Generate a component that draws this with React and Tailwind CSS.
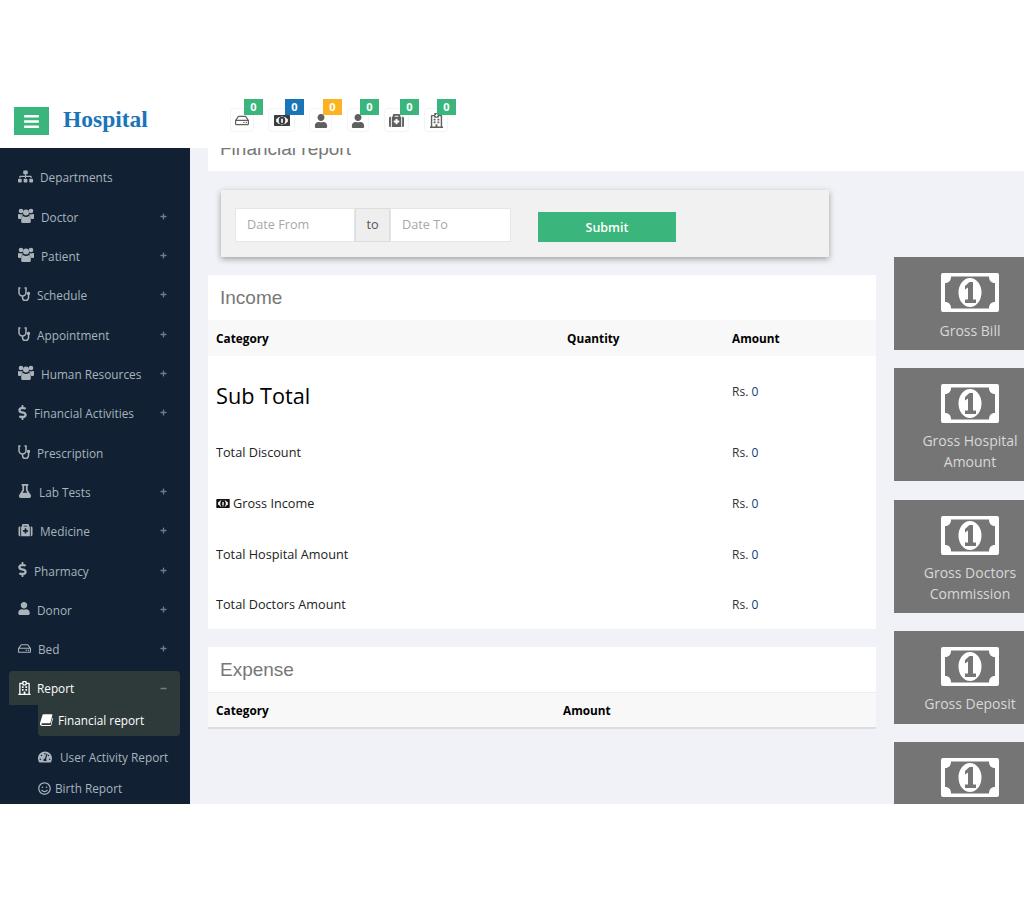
import React from "react";
import { FaSitemap, FaFlask, FaMedkit, FaUser, FaDollarSign, FaRegHdd, FaRegHospital, FaTachometerAlt, FaRegSmile, FaBars, FaPlus, FaMinus } from "react-icons/fa";

const Money = ({ className }) => (
  <svg viewBox="0 0 58 39" className={className} fill="currentColor">
    <path fillRule="evenodd" d="M2 0H56a2 2 0 0 1 2 2V37a2 2 0 0 1-2 2H2a2 2 0 0 1-2-2V2a2 2 0 0 1 2-2ZM10 3.500C10 7.500 8 10 4 10V29C8 29 10 31.500 10 35.500H48C48 31.500 50 29 54 29V10C50 10 48 7.500 48 3.500ZM29 5a11.500 14.500 0 1 0 0 29a11.500 14.500 0 1 0 0-29ZM24 30V26.500H27V14.500L24 16.500V13L28.500 9H32V26.500H35V30Z" />
  </svg>
);

const MoneySmall = ({ className }) => (
  <svg viewBox="0 0 58 39" className={className} fill="currentColor">
    <path fillRule="evenodd" d="M2 0H56a2 2 0 0 1 2 2V37a2 2 0 0 1-2 2H2a2 2 0 0 1-2-2V2a2 2 0 0 1 2-2ZM17 7C15 11 12 13 8 14V25C12 26 15 28 17 32H41C43 28 46 26 50 25V14C46 13 43 11 41 7ZM29 5a12 14.500 0 1 1 0 29a12 14.500 0 1 1 0-29ZM26 28V13H32V28Z" />
  </svg>
);

const Users = ({ className }) => (
  <svg viewBox="0 0 16 15" className={className} fill="currentColor">
    <circle cx="3" cy="3" r="2.300" />
    <circle cx="13" cy="3" r="2.300" />
    <circle cx="8" cy="4.500" r="3" />
    <path d="M0 6.500Q0 5.800 1 6Q3 6.800 4.800 6Q4.600 8 3.300 9.500Q2.800 10.500 2.800 11H1Q0 11 0 10ZM16 6.500Q16 5.800 15 6Q13 6.800 11.200 6Q11.400 8 12.700 9.500Q13.200 10.500 13.200 11H15Q16 11 16 10ZM5 8Q8 9.800 11 8Q12.800 8.500 12.800 11V13.500Q12.800 15 11.500 15H4.500Q3.200 15 3.200 13.500V11Q3.200 8.500 5 8Z" />
  </svg>
);

const Stetho = ({ className }) => (
  <svg viewBox="0 0 12 14" className={className} fill="none" stroke="currentColor" strokeWidth="1.500">
    <path d="M2.500 1H1V5.500A3.500 3.500 0 0 0 8 5.500V1H6.500" />
    <path d="M4.500 9V10.500A2.800 2.800 0 0 0 10.500 10.500V8" />
    <circle cx="10.500" cy="6.500" r="1" fill="currentColor" />
  </svg>
);

const Book = ({ className }) => (
  <svg viewBox="0 0 14 13" className={className} fill="currentColor">
    <path d="M3.800 .300H12.800Q13.600 .300 13.300 1.300L11.300 9.300Q11.100 10 10.300 10H2.500C1 10 1 11.800 2.500 11.800H11.500L13.300 4L14 4.800L12.300 12Q12 13 11 13H2.300C-.200 13 -.500 10.500 .300 9L2.500 1.500Q2.800 .300 3.800 .300Z" />
  </svg>
);

const items = [
  [FaSitemap, "Departments", 22, false, "w-[15px] h-[15px]"],
  [Users, "Doctor", 23, true, "w-[16px] h-[15px]"],
  [Users, "Patient", 23, true, "w-[16px] h-[15px]"],
  [Stetho, "Schedule", 19, true, "w-[12px] h-[14px]"],
  [Stetho, "Appointment", 19, true, "w-[12px] h-[14px]"],
  [Users, "Human Resources", 23, true, "w-[16px] h-[15px]"],
  [FaDollarSign, "Financial Activities", 16, true, "w-[9px] h-[15px]"],
  [Stetho, "Prescription", 19, false, "w-[12px] h-[14px]"],
  [FaFlask, "Lab Tests", 21, true, "w-[14px] h-[14px]"],
  [FaMedkit, "Medicine", 22, true, "w-[15px] h-[14px]"],
  [FaDollarSign, "Pharmacy", 16, true, "w-[9px] h-[15px]"],
  [FaUser, "Donor", 19, true, "w-[12px] h-[13px]"],
  [FaRegHdd, "Bed", 20, true, "w-[13px] h-[13px]"],
];

const badges = [
  [FaRegHdd, "bg-[#3ab57c]", "w-[24px]", "h-[13px] w-[14px]", "-right-[10px]"],
  [null, "bg-[#1a75b8]", "w-[27px] ml-[14px]", "", "-right-[10px]"],
  [FaUser, "bg-[#fcb322]", "w-[23px] ml-[14px]", "h-[14px] w-[14px]", "-right-[11px]"],
  [FaUser, "bg-[#3ab57c]", "w-[22px] ml-[15px]", "h-[14px] w-[14px]", "-right-[11px]"],
  [FaMedkit, "bg-[#3ab57c]", "w-[25px] ml-[15px]", "h-[15px] w-[15px]", "-right-[11px]"],
  [FaRegHospital, "bg-[#3ab57c]", "w-[24px] ml-[15px]", "h-[15px] w-[15px]", "-right-[9px]"],
];

const rows = [
  ["Total Discount", 51],
  ["Gross Income", 51, true],
  ["Total Hospital Amount", 51],
  ["Total Doctors Amount", 50],
];

const tiles = [
  ["Gross Bill", "h-[93px]", "mt-[8px]"],
  ["Gross Hospital Amount", "h-[113px]", "mt-[7px]"],
  ["Gross Doctors Commission", "h-[113px] mt-[1px]", "mt-[7px]"],
  ["Gross Deposit", "h-[93px]", "mt-[7px]"],
  ["", "h-[93px]", "mt-[8px]"],
];

export default function App() {
  return (
    <div className="w-[1024px] h-[900px] bg-white overflow-hidden font-['Open_Sans',sans-serif]">
      <div className="h-[98px]" />
      <header className="h-[50px] bg-white flex items-center relative z-10">
        <button className="ml-[14px] mt-[-4px] w-[35px] h-[28px] bg-[#3ab57c] text-white flex items-center justify-center">
          <FaBars className="w-[17px] h-[17px]" />
        </button>
        <div className="ml-[14px] mt-[-6px] w-[167px] text-[#1a75b8] text-[23.500px] font-bold font-['Liberation_Serif',serif] leading-none">Hospital</div>
        <div className="flex self-start">
          {badges.map(([Icon, bg, w, iconSize, off], i) => (
            <div key={i} className={`relative h-[24px] mt-[10px] border border-[#f3f4f8] rounded-[4px] flex items-center justify-center pt-[1px] text-[#5f5f5f] ${w}`}>
              {Icon ? <Icon className={iconSize} /> : <MoneySmall className="w-[16px] h-[11px] text-[#3d3d3d]" />}
              <span className={`absolute top-[-10px] ${off} w-[19px] h-[16px] ${bg} text-white text-[11px] font-bold leading-[16px] text-center`}>0</span>
            </div>
          ))}
        </div>
      </header>

      <div className="flex h-[656px]">
        <aside className="w-[190px] shrink-0 bg-[#112133] overflow-hidden pt-[9px] text-[#a9b3bd] text-[11.800px]">
          {items.map(([Icon, label, w, plus, size]) => (
            <div key={label} className="h-[39.350px] flex items-center pl-[18px] pr-[23px]">
              <span className="shrink-0 flex items-center mt-[-1px]" style={{ width: w }}>
                <Icon className={`${size} text-[#aab2ba]`} />
              </span>
              <span className="flex-1 whitespace-nowrap mt-[3px]">{label}</span>
              {plus && <FaPlus className="w-[7px] h-[7px] text-[#6f7c89]" />}
            </div>
          ))}
          <div className="ml-[9px] mr-[10px] h-[34px] mt-[3px] bg-[#2e3a3a] rounded-t-[4px] flex items-center pl-[9px] pr-[13px] text-white">
            <FaRegHospital className="w-[13px] h-[14px] mr-[6px]" />
            <span className="flex-1">Report</span>
            <FaMinus className="w-[7px] h-[7px] text-[#6f7c89]" />
          </div>
          <div className="ml-[38px] mr-[10px] h-[31px] pb-[1px] bg-[#2e3a3a] rounded-b-[4px] flex items-center text-white pl-[2px]">
            <Book className="w-[13px] h-[12px] mr-[5px]" />
            <span>Financial report</span>
          </div>
          <div className="ml-[38px] h-[36px] flex items-center whitespace-nowrap mt-[3px]">
            <FaTachometerAlt className="w-[14px] h-[14px] mr-[8px]" />
            <span>User Activity Report</span>
          </div>
          <div className="ml-[38px] h-[26px] flex items-center">
            <FaRegSmile className="w-[13px] h-[13px] mr-[4px]" />
            <span>Birth Report</span>
          </div>
        </aside>

        <main className="flex-1 bg-[#f1f2f7] overflow-hidden pl-[18px]">
          <div className="h-[23px] bg-white relative overflow-hidden">
            <div className="absolute left-[12px] top-[-13px] text-[19px] text-[#777777] font-['Liberation_Sans',sans-serif] whitespace-nowrap">Financial report</div>
          </div>

          <div className="flex">
            <div className="w-[668px] shrink-0">
              <div className="ml-[13px] mt-[19px] w-[608px] h-[67px] bg-[#f1f1f1] shadow-[0_2px_6px_rgba(0,0,0,0.35)] flex items-center pl-[14px] pt-[2px]">
                <div className="flex h-[34px] text-[12.700px]">
                  <div className="w-[120px] bg-white border border-[#e6e6e6] flex items-center pl-[11px] text-[#a8a8a8]">Date From</div>
                  <div className="w-[35px] bg-[#eeeeee] border border-[#dddddd] flex items-center justify-center text-[#555555]">to</div>
                  <div className="w-[121px] bg-white border border-[#e6e6e6] flex items-center pl-[11px] text-[#a8a8a8]">Date To</div>
                </div>
                <button className="ml-[27px] mt-[4px] w-[138px] h-[30px] pt-[3px] bg-[#3ab57c] text-white text-[12.500px] font-semibold">Submit</button>
              </div>

              <section className="mt-[18px] bg-white h-[354px]">
                <h2 className="h-[45px] flex items-center pl-[12px] pt-[2px] text-[19px] text-[#777777] font-['Liberation_Sans',sans-serif]">Income</h2>
                <div className="h-[36px] pt-[2px] bg-[#f8f8f8] flex items-center text-[11.800px] font-bold text-black">
                  <span className="pl-[8px] w-[359px]">Category</span>
                  <span className="w-[165px]">Quantity</span>
                  <span>Amount</span>
                </div>
                <div className="h-[71px] flex items-center text-black">
                  <span className="pl-[8px] w-[524px] text-[21.700px] mt-[10px]">Sub Total</span>
                  <span className="text-[12px] text-[#333333]">Rs. <span className="text-[#0b3d73]">0</span></span>
                </div>
                {rows.map(([label, h, icon]) => (
                  <div key={label} className="flex items-center text-[#222222]" style={{ height: h }}>
                    <span className="pl-[8px] w-[524px] text-[12.700px] flex items-center">
                      {icon && <MoneySmall className="w-[14px] h-[9px] mr-[3px] text-[#111111]" />}
                      {label}
                    </span>
                    <span className="text-[12px] text-[#333333]">Rs. <span className="text-[#0b3d73]">0</span></span>
                  </div>
                ))}
              </section>

              <section className="mt-[18px] bg-white border-b-2 border-[#dddddd] h-[82px]">
                <h2 className="h-[46px] flex items-center pl-[12px] pt-[2px] text-[19px] text-[#777777] font-['Liberation_Sans',sans-serif] border-b border-[#eeeeee]">Expense</h2>
                <div className="h-[34px] pt-[2px] bg-[#f8f8f8] flex items-center text-[11.800px] font-bold text-black">
                  <span className="pl-[8px] w-[355px]">Category</span>
                  <span>Amount</span>
                </div>
              </section>
            </div>

            <div className="ml-[18px] w-[152px] shrink-0 pt-[86px] flex flex-col gap-[18px]">
              {tiles.map(([t, h, m], i) => (
                <div key={i} className={`${h} shrink-0 bg-[#757575] flex flex-col items-center pt-[16px] text-[#d8d8d8] text-[14px] leading-[21px] text-center`}>
                  <Money className="w-[58px] h-[39px] text-white shrink-0" />
                  <div className={`${m} w-[120px]`}>{t}</div>
                </div>
              ))}
            </div>
          </div>
        </main>
      </div>
    </div>
  );
}
